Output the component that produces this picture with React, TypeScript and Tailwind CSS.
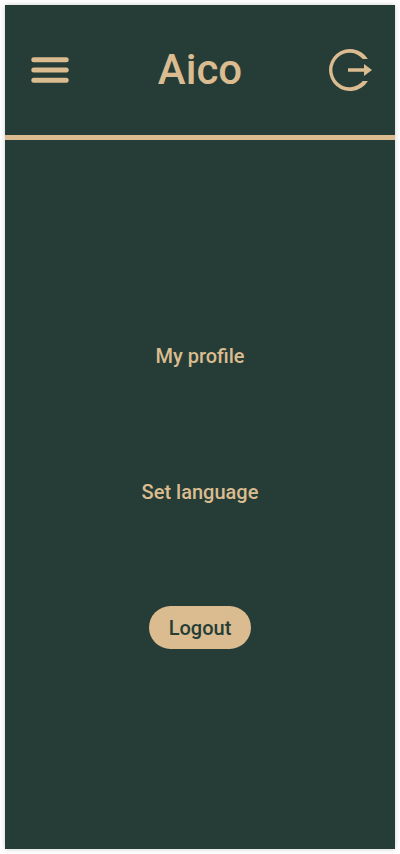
export default function App() {
  return (
    <div className="flex min-h-screen bg-white p-[5px] font-['Roboto',sans-serif] font-medium">
      <div className="flex flex-1 flex-col bg-[#253d36] text-[#dbbc90] shadow-[0_0_5px_rgba(0,0,0,0.2)]">
        <header className="flex h-[135px] items-center justify-between border-b-5 border-[#dbbc90] px-[23px]">
          <button type="button" aria-label="Menu" className="flex w-11 justify-center">
            <svg width="38" height="26" viewBox="0 0 38 26" fill="none" stroke="currentColor" strokeWidth="5" strokeLinecap="round">
              <path d="M2.8 2.8H35.2M2.8 13H35.2M2.8 23.2H35.2" />
            </svg>
          </button>
          <h1 className="text-[42px] leading-12">Aico</h1>
          <button type="button" aria-label="Log out" className="flex w-11 justify-center">
            <svg width="44" height="44" viewBox="0 0 44 44" fill="currentColor">
              <path d="M39.9 11A21 21 0 1 0 39.9 33H34.8A17.2 17.2 0 1 1 34.8 11Z" />
              <path d="M20 20.2H36V16L44 22L36 28V23.8H20Z" />
            </svg>
          </button>
        </header>
        <main className="flex flex-1 flex-col items-center justify-center gap-[93px] pb-1.5 text-xl">
          <button type="button" className="h-[43px] px-5">My profile</button>
          <button type="button" className="h-[43px] px-5">Set language</button>
          <button type="button" className="h-[43px] rounded-full bg-[#dbbc90] px-5 text-[#253d36]">Logout</button>
        </main>
      </div>
    </div>
  );
}
